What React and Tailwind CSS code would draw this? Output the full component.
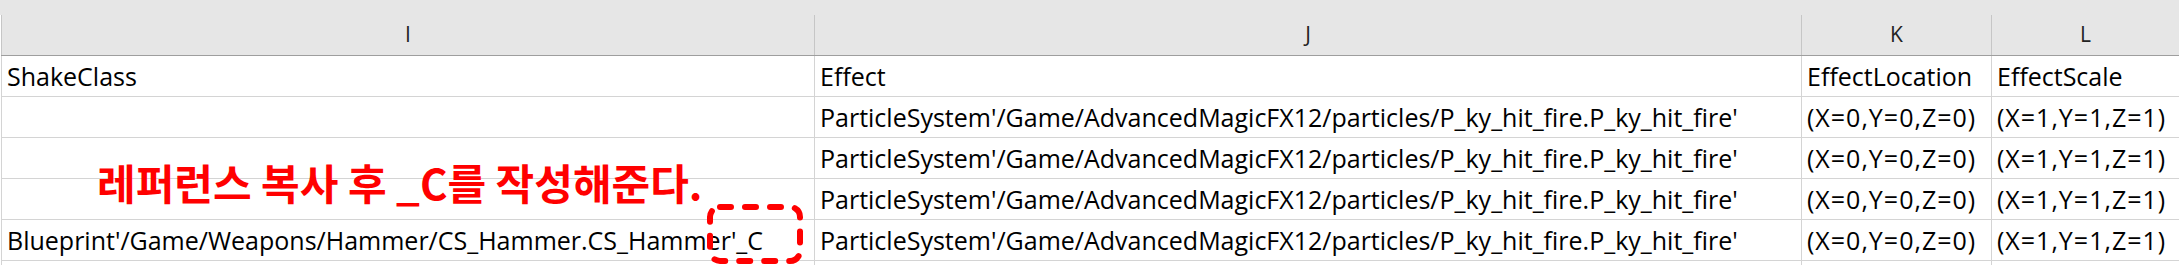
import React from "react";

const rowsI = ["ShakeClass", "", "", "", "Blueprint'/Game/Weapons/Hammer/CS_Hammer.CS_Hammer'_C", ""];
const eff = "ParticleSystem'/Game/AdvancedMagicFX12/particles/P_ky_hit_fire.P_ky_hit_fire'";
const rowsJ = ["Effect", eff, eff, eff, eff, ""];
const rowsK = ["EffectLocation", "(X=0,Y=0,Z=0)", "(X=0,Y=0,Z=0)", "(X=0,Y=0,Z=0)", "(X=0,Y=0,Z=0)", ""];
const rowsL = ["EffectScale", "(X=1,Y=1,Z=1)", "(X=1,Y=1,Z=1)", "(X=1,Y=1,Z=1)", "(X=1,Y=1,Z=1)", ""];

function Cell({ children, first, last, wide }) {
  return (
    <div
      className={
        "h-[41px] border-b border-[#d4d4d4] flex items-end pl-[5px] pb-[5px] whitespace-nowrap overflow-visible text-[25px] leading-[30px] text-black " +
        (first ? "border-l " : "") +
        (last ? "" : "border-r ") +
        (wide ? "tracking-[1px] " : "")
      }
    >
      {children}
    </div>
  );
}

export default function App() {
  const rows = [0, 1, 2, 3, 4, 5];
  return (
    <div className="relative w-[2179px] h-[265px] overflow-hidden bg-white font-['Open_Sans',sans-serif]">
      <div className="h-[15px] bg-[#e6e6e6]" />
      <div className="ml-px grid grid-cols-[814px_987px_190px_1fr] bg-[#e6e6e6] border-b border-[#9e9e9e]">
        {["I", "J", "K", "L"].map((c, i) => (
          <div
            key={c}
            className={
              "h-[40px] flex items-center justify-center text-[21px] text-[#222] border-[#c6c6c6] " +
              (i === 0 ? "border-l " : "") +
              (i === 3 ? "" : "border-r ")
            }
          >
            {c}
          </div>
        ))}
      </div>
      <div className="ml-px grid grid-cols-[814px_987px_190px_1fr]">
        {rows.map((r) => (
          <React.Fragment key={r}>
            <Cell first>{rowsI[r]}</Cell>
            <Cell>{rowsJ[r]}</Cell>
            <Cell wide={r > 0}>{rowsK[r]}</Cell>
            <Cell last wide={r > 0}>{rowsL[r]}</Cell>
          </React.Fragment>
        ))}
      </div>
      <div className="absolute left-[97px] top-[161px] text-[42px] leading-none font-bold text-[#ff0000] whitespace-nowrap font-['Noto_Sans_CJK_KR',sans-serif]">
        레퍼런스 복사 후 _C를 작성해준다.
      </div>
      <svg className="absolute left-[700px] top-[197px]" width="120" height="80" viewBox="0 0 120 80">
        <rect
          x="10"
          y="10"
          width="90"
          height="54"
          rx="10"
          fill="none"
          stroke="#ff0000"
          strokeWidth="6"
          strokeDasharray="11 14"
          strokeLinecap="round"
        />
      </svg>
    </div>
  );
}
